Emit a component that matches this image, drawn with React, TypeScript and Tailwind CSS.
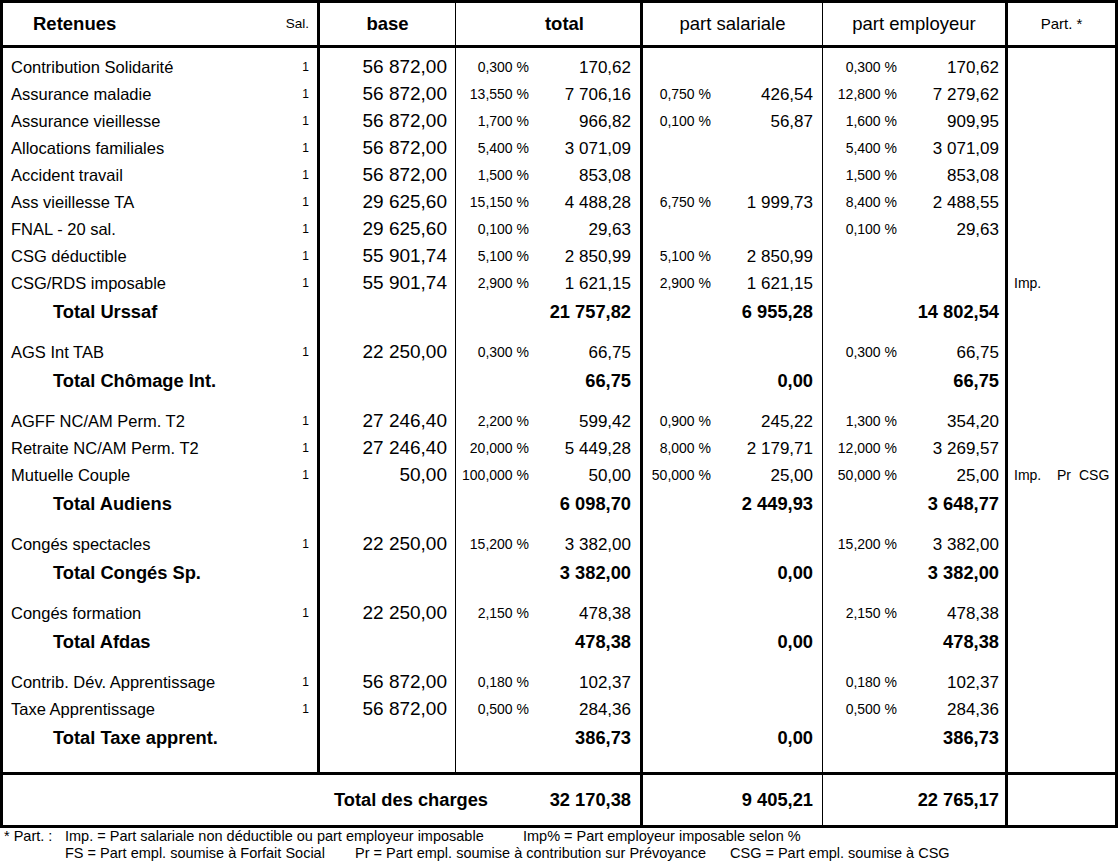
type Line = [string, string, string, string, string, string, string, string, string];

const groups: { rows: Line[]; total: [string, string, string, string] }[] = [
  {
    rows: [
      ["Contribution Solidarité", "56 872,00", "0,300 %", "170,62", "", "", "0,300 %", "170,62", ""],
      ["Assurance maladie", "56 872,00", "13,550 %", "7 706,16", "0,750 %", "426,54", "12,800 %", "7 279,62", ""],
      ["Assurance vieillesse", "56 872,00", "1,700 %", "966,82", "0,100 %", "56,87", "1,600 %", "909,95", ""],
      ["Allocations familiales", "56 872,00", "5,400 %", "3 071,09", "", "", "5,400 %", "3 071,09", ""],
      ["Accident travail", "56 872,00", "1,500 %", "853,08", "", "", "1,500 %", "853,08", ""],
      ["Ass vieillesse TA", "29 625,60", "15,150 %", "4 488,28", "6,750 %", "1 999,73", "8,400 %", "2 488,55", ""],
      ["FNAL - 20 sal.", "29 625,60", "0,100 %", "29,63", "", "", "0,100 %", "29,63", ""],
      ["CSG déductible", "55 901,74", "5,100 %", "2 850,99", "5,100 %", "2 850,99", "", "", ""],
      ["CSG/RDS imposable", "55 901,74", "2,900 %", "1 621,15", "2,900 %", "1 621,15", "", "", "imp"],
    ],
    total: ["Total Urssaf", "21 757,82", "6 955,28", "14 802,54"],
  },
  {
    rows: [["AGS Int TAB", "22 250,00", "0,300 %", "66,75", "", "", "0,300 %", "66,75", ""]],
    total: ["Total Chômage Int.", "66,75", "0,00", "66,75"],
  },
  {
    rows: [
      ["AGFF NC/AM Perm. T2", "27 246,40", "2,200 %", "599,42", "0,900 %", "245,22", "1,300 %", "354,20", ""],
      ["Retraite NC/AM Perm. T2", "27 246,40", "20,000 %", "5 449,28", "8,000 %", "2 179,71", "12,000 %", "3 269,57", ""],
      ["Mutuelle Couple", "50,00", "100,000 %", "50,00", "50,000 %", "25,00", "50,000 %", "25,00", "all"],
    ],
    total: ["Total Audiens", "6 098,70", "2 449,93", "3 648,77"],
  },
  {
    rows: [["Congés spectacles", "22 250,00", "15,200 %", "3 382,00", "", "", "15,200 %", "3 382,00", ""]],
    total: ["Total Congés Sp.", "3 382,00", "0,00", "3 382,00"],
  },
  {
    rows: [["Congés formation", "22 250,00", "2,150 %", "478,38", "", "", "2,150 %", "478,38", ""]],
    total: ["Total Afdas", "478,38", "0,00", "478,38"],
  },
  {
    rows: [
      ["Contrib. Dév. Apprentissage", "56 872,00", "0,180 %", "102,37", "", "", "0,180 %", "102,37", ""],
      ["Taxe Apprentissage", "56 872,00", "0,500 %", "284,36", "", "", "0,500 %", "284,36", ""],
    ],
    total: ["Total Taxe apprent.", "386,73", "0,00", "386,73"],
  },
];

const cols = "grid grid-cols-[317px_136px_187px_180px_185px_107px]";

const Spacer = ({ h }: { h: string }) => (
  <div className={`${cols} ${h}`}>
    <div className="border-r-[3px] border-black" />
    <div className="border-r border-black" />
    <div className="border-r-[3px] border-black" />
    <div className="border-r border-black" />
    <div className="border-r-[3px] border-black" />
    <div />
  </div>
);

const DetailRow = ({ r }: { r: Line }) => (
  <div className={`${cols} h-[27px] whitespace-nowrap`}>
    <div className="border-r-[3px] border-black flex items-center justify-between pl-[8px] pr-[8px]">
      <span className="text-[16.5px]">{r[0]}</span>
      <span className="text-[12px]">1</span>
    </div>
    <div className="border-r border-black flex items-center justify-end pr-[8px] text-[19px]">{r[1]}</div>
    <div className="border-r-[3px] border-black flex items-center">
      <span className="w-[73px] text-right text-[14px]">{r[2]}</span>
      <span className="flex-1 text-right pr-[9px] text-[17px]">{r[3]}</span>
    </div>
    <div className="border-r border-black flex items-center">
      <span className="w-[68px] text-right text-[14px]">{r[4]}</span>
      <span className="flex-1 text-right pr-[9px] text-[17px]">{r[5]}</span>
    </div>
    <div className="border-r-[3px] border-black flex items-center">
      <span className="w-[74px] text-right text-[14px]">{r[6]}</span>
      <span className="flex-1 text-right pr-[6px] text-[17px]">{r[7]}</span>
    </div>
    <div className="flex items-center pl-[6px] text-[14px]">
      {r[8] === "imp" && <span>Imp.</span>}
      {r[8] === "all" && (
        <>
          <span className="w-[43px]">Imp.</span>
          <span className="w-[22px]">Pr</span>
          <span>CSG</span>
        </>
      )}
    </div>
  </div>
);

const TotalRow = ({ t }: { t: [string, string, string, string] }) => (
  <div className={`${cols} h-[32px] whitespace-nowrap font-bold text-[18.3px]`}>
    <div className="border-r-[3px] border-black flex items-center pl-[50px]">{t[0]}</div>
    <div className="border-r border-black" />
    <div className="border-r-[3px] border-black flex items-center justify-end pr-[9px]">{t[1]}</div>
    <div className="border-r border-black flex items-center justify-end pr-[9px]">{t[2]}</div>
    <div className="border-r-[3px] border-black flex items-center justify-end pr-[6px]">{t[3]}</div>
    <div />
  </div>
);

export default function App() {
  return (
    <div className="w-[1118px] h-[864px] bg-white text-black font-['Liberation_Sans',Arial,sans-serif]">
      <div className="border-[3px] border-black">
        {/* header */}
        <div className={`${cols} h-[45px] border-b-[3px] border-black whitespace-nowrap text-[18.5px]`}>
          <div className="border-r-[3px] border-black flex items-center justify-between pl-[30px] pr-[8px]">
            <span className="font-bold">Retenues</span>
            <span className="text-[13.5px]">Sal.</span>
          </div>
          <div className="border-r border-black flex items-center justify-center font-bold">base</div>
          <div className="border-r-[3px] border-black flex items-center justify-end pr-[56px] font-bold">total</div>
          <div className="border-r border-black flex items-center justify-center">part salariale</div>
          <div className="border-r-[3px] border-black flex items-center justify-center">part employeur</div>
          <div className="flex items-center justify-center text-[15px]">Part. *</div>
        </div>

        {/* body */}
        <Spacer h="h-[5px]" />
        {groups.map((g, gi) => (
          <div key={gi}>
            {g.rows.map((r, i) => (
              <DetailRow key={i} r={r} />
            ))}
            <TotalRow t={g.total} />
            <Spacer h={gi === groups.length - 1 ? "h-[18px]" : "h-[10px]"} />
          </div>
        ))}

        {/* grand total */}
        <div className="grid grid-cols-[640px_180px_185px_107px] h-[53px] border-t-[3px] border-black whitespace-nowrap font-bold text-[18.3px]">
          <div className="border-r-[3px] border-black flex items-center justify-end pr-[9px]">
            <span>Total des charges</span>
            <span className="w-[143px] text-right">32 170,38</span>
          </div>
          <div className="border-r border-black flex items-center justify-end pr-[9px]">9 405,21</div>
          <div className="border-r-[3px] border-black flex items-center justify-end pr-[6px]">22 765,17</div>
          <div />
        </div>
      </div>

      {/* legend */}
      <div className="text-[14.5px] leading-[17px] whitespace-nowrap flex pl-[4px]">
        <div className="w-[61px]">* Part. :</div>
        <div>
          <div className="flex">
            <span className="w-[458px]">Imp. = Part salariale non déductible ou part employeur imposable</span>
            <span>Imp% = Part employeur imposable selon %</span>
          </div>
          <div className="flex">
            <span className="w-[290px]">FS = Part empl. soumise à Forfait Social</span>
            <span className="w-[375px]">Pr = Part empl. soumise à contribution sur Prévoyance</span>
            <span>CSG = Part empl. soumise à CSG</span>
          </div>
        </div>
      </div>
    </div>
  );
}
